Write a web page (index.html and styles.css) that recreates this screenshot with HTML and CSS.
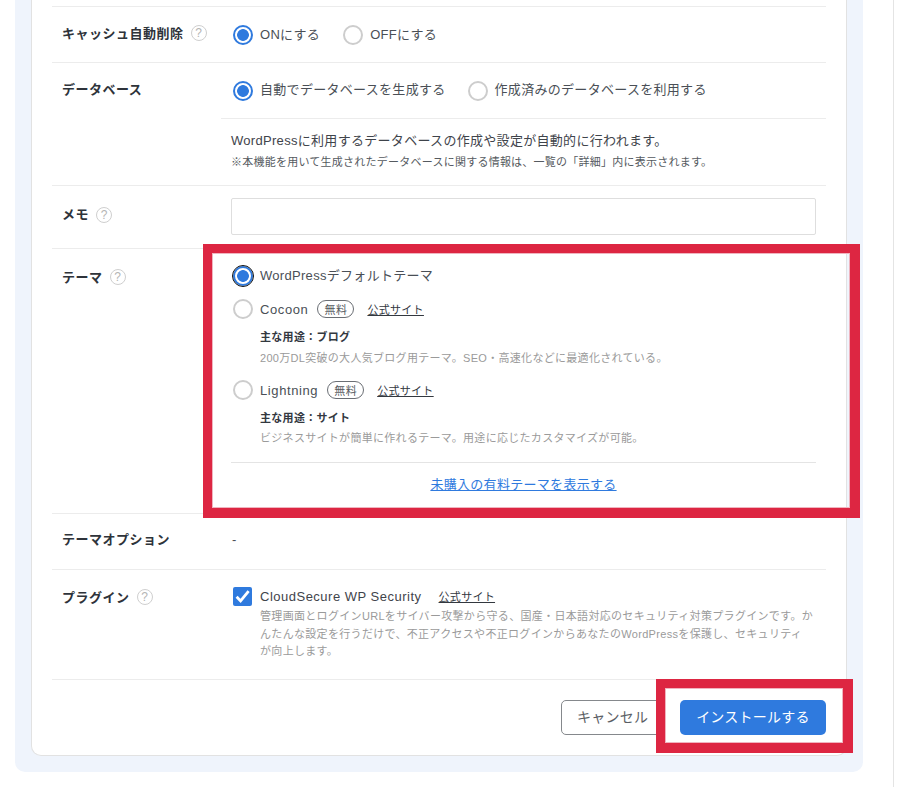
FILE: index.html
```html
<!DOCTYPE html>
<html lang="ja">
<head>
<meta charset="utf-8">
<title>WordPress インストール</title>
<link rel="stylesheet" href="styles.css">
</head>
<body>
<div class="page">
  <main class="panel">
    <section class="card">
      <div class="row row-top"></div>

      <div class="row row-cache">
        <div class="label">キャッシュ自動削除<span class="help">?</span></div>
        <div class="value radios">
          <label class="choice"><span class="radio on"></span>ONにする</label>
          <label class="choice"><span class="radio"></span>OFFにする</label>
        </div>
      </div>

      <div class="row row-db">
        <div class="db-head">
          <div class="label">データベース</div>
          <div class="value radios">
            <label class="choice"><span class="radio on"></span>自動でデータベースを生成する</label>
            <label class="choice"><span class="radio"></span>作成済みのデータベースを利用する</label>
          </div>
        </div>
        <div class="db-note">
          <p class="note-main">WordPressに利用するデータベースの作成や設定が自動的に行われます。</p>
          <p class="note-sub">※本機能を用いて生成されたデータベースに関する情報は、一覧の「詳細」内に表示されます。</p>
        </div>
      </div>

      <div class="row row-memo">
        <div class="label">メモ<span class="help">?</span></div>
        <div class="value"><div class="memo-input"></div></div>
      </div>

      <div class="row row-theme">
        <div class="label">テーマ<span class="help">?</span></div>
        <div class="value themes">
          <label class="choice theme-default"><span class="radio on focus"></span>WordPressデフォルトテーマ</label>

          <div class="theme">
            <div class="theme-head">
              <span class="radio"></span><span class="theme-name">Cocoon</span><span class="badge">無料</span><a class="site-link" href="#">公式サイト</a>
            </div>
            <p class="use">主な用途：ブログ</p>
            <p class="desc">200万DL突破の大人気ブログ用テーマ。SEO・高速化などに最適化されている。</p>
          </div>

          <div class="theme">
            <div class="theme-head">
              <span class="radio"></span><span class="theme-name">Lightning</span><span class="badge">無料</span><a class="site-link" href="#">公式サイト</a>
            </div>
            <p class="use">主な用途：サイト</p>
            <p class="desc">ビジネスサイトが簡単に作れるテーマ。用途に応じたカスタマイズが可能。</p>
          </div>

          <div class="more"><a href="#">未購入の有料テーマを表示する</a></div>
        </div>
      </div>

      <div class="row row-option">
        <div class="label">テーマオプション</div>
        <div class="value dash">-</div>
      </div>

      <div class="row row-plugin">
        <div class="label">プラグイン<span class="help">?</span></div>
        <div class="value plugin">
          <span class="check"><svg viewBox="0 0 19 19" width="19" height="19"><path d="M3.6 9.8 7.6 14 15.6 4.2" fill="none" stroke="#fff" stroke-width="2.8"/></svg></span>
          <div class="plugin-body">
            <div class="plugin-head"><span class="plugin-name">CloudSecure WP Security</span><a class="site-link" href="#">公式サイト</a></div>
            <p class="plugin-desc">管理画面とログインURLをサイバー攻撃から守る、国産・日本語対応のセキュリティ対策プラグインです。かんたんな設定を行うだけで、不正アクセスや不正ログインからあなたのWordPressを保護し、セキュリティ<br>が向上します。</p>
          </div>
        </div>
      </div>

      <div class="actions">
        <button class="btn btn-cancel" type="button">キャンセル</button>
        <button class="btn btn-install" type="button">インストールする</button>
      </div>
    </section>
  </main>
  <aside class="side"></aside>
</div>
<div class="mark mark-theme"></div>
<div class="mark mark-install"></div>
</body>
</html>
```

FILE: styles.css
```css
* { box-sizing: border-box; }
html, body { margin: 0; padding: 0; }
body {
  position: relative;
  width: 920px;
  height: 787px;
  overflow: hidden;
  background: #fff;
  color: #33383f;
  font-family: "Liberation Sans", "Noto Sans CJK JP", sans-serif;
  font-size: 13px;
  letter-spacing: 0.3px;
}
p { margin: 0; }
a { color: inherit; }

.page { display: flex; height: 787px; }
.panel {
  width: 848px;
  height: 772px;
  margin-left: 15px;
  padding: 0 16px 16px;
  background: #eff4fc;
  border-radius: 0 0 10px 10px;
}
.card {
  height: 756px;
  padding: 0 20px;
  background: #fff;
  border: 1px solid #e2e2e2;
  border-top: 0;
  border-radius: 0 0 10px 10px;
}
.side {
  width: 1px;
  margin-left: 30px;
  background: #e4e4e4;
}

.row {
  display: flex;
  border-bottom: 1px solid #ececec;
}
.row-top { height: 7px; }
.row-cache { height: 56px; padding-top: 16px; }
.row-db { display: block; height: 123px; }
.db-head { display: flex; height: 55px; padding-top: 16px; }
.row-memo { height: 63px; padding-top: 12px; }
.row-theme { height: 265px; padding-top: 16px; }
.row-option { height: 56px; padding-top: 15px; }
.row-plugin { height: 110px; padding-top: 17px; }

.label {
  display: flex;
  align-items: center;
  flex: none;
  width: 169px;
  height: 18px;
  margin-left: 10px;
  color: #2e333a;
  font-weight: 700;
  font-size: 13px;
  letter-spacing: 0.5px;
}
.row-memo .label { margin-top: 6px; }
.row-theme .label { margin-top: 2px; }
.help {
  display: flex;
  align-items: center;
  justify-content: center;
  width: 16px;
  height: 16px;
  margin: 1px 0 0 7px;
  border: 1.5px solid #cfcfcf;
  border-radius: 50%;
  color: #b5b5b5;
  font-family: "Liberation Sans", sans-serif;
  font-size: 12px;
  font-weight: 400;
  letter-spacing: 0;
}
.row-memo .help { margin-top: 4px; }
.value { flex: 1; min-width: 0; }

.radios { display: flex; gap: 23px; padding: 2px 0 0 2px; }
.choice {
  display: flex;
  align-items: flex-start;
  gap: 7px;
  height: 20px;
  color: #4a4f56;
  line-height: 20px;
}
.radio {
  flex: none;
  width: 20px;
  height: 20px;
  background: #fff;
  border: 2px solid #cdcdcd;
  border-radius: 50%;
}
.radio.on {
  border: 2.5px solid #2f7ade;
  background: radial-gradient(circle, #2f7ade 0, #2f7ade 5.5px, #fff 6.2px);
}
.radio.focus { outline: 1.5px solid #111; outline-offset: 0; }

.db-head .radios { gap: 22px; }
.db-head .choice { line-height: 18px; }

.db-note {
  height: 68px;
  margin-left: 169px;
  padding: 13px 0 0 10px;
  border-top: 1px solid #ececec;
}
.note-main { line-height: 18px; color: #3f444b; }
.note-sub { margin-top: 5px; font-size: 11px; line-height: 14px; color: #555a60; letter-spacing: 0.24px; }

.memo-input {
  width: 585px;
  height: 37px;
  background: #fff;
  border: 1px solid #dedede;
  border-radius: 2px;
}

.themes { padding-top: 1px; }
.theme-default { margin-left: 2px; }
.theme { margin-left: 2px; }
.theme-default + .theme { margin-top: 13px; }
.theme + .theme { margin-top: 14px; }
.theme-head {
  display: flex;
  align-items: center;
  height: 20px;
  color: #4a4f56;
}
.theme-name { margin-left: 7px; letter-spacing: 0.6px; }
.badge {
  display: flex;
  align-items: center;
  justify-content: center;
  width: 37px;
  height: 18px;
  margin-left: 9px;
  border: 1px solid #6a6e74;
  border-radius: 9px;
  color: #555a60;
  font-size: 11px;
  letter-spacing: 0.3px;
}
.site-link {
  margin-left: 13px;
  color: #33383f;
  font-size: 11px;
  letter-spacing: 0.3px;
}
.use {
  margin-top: 10px;
  padding-left: 27px;
  color: #33383f;
  font-size: 11px;
  font-weight: 700;
  line-height: 16px;
  letter-spacing: 0.3px;
}
.desc {
  margin-top: 5px;
  padding-left: 27px;
  color: #9a9a9a;
  font-size: 11px;
  line-height: 16px;
  letter-spacing: 0.3px;
}
.theme + .theme .desc { margin-top: 4px; }
.more {
  width: 585px;
  height: 44px;
  margin-top: 16px;
  padding-top: 12px;
  border-top: 1px solid #e4e4e4;
  text-align: center;
  line-height: 20px;
}
.more a { color: #2f7ade; }

.dash { color: #4a4f56; line-height: 18px; padding-top: 2px; padding-left: 1px; }

.plugin { display: flex; padding-left: 2px; }
.check {
  flex: none;
  width: 19px;
  height: 19px;
  background: #2f7ade;
  border-radius: 2px;
}
.check svg { display: block; }
.plugin-body { margin-left: 8px; width: 555px; }
.plugin-head { display: flex; align-items: center; height: 18px; color: #3f444b; }
.plugin-name { letter-spacing: 0.5px; }
.plugin-head .site-link { margin-left: 17px; }
.plugin-desc {
  margin-top: 3px;
  color: #9a9a9a;
  font-size: 11px;
  line-height: 17.6px;
  letter-spacing: 0.32px;
}

.actions {
  display: flex;
  justify-content: flex-end;
  gap: 19px;
  padding-top: 20px;
}
.btn {
  height: 35px;
  padding: 0 0 3px;
  border-radius: 5px;
  font-family: inherit;
  font-size: 14px;
  letter-spacing: 0.25px;
  cursor: pointer;
}
.btn-cancel {
  width: 100px;
  padding-left: 15px;
  background: #fff;
  border: 1px solid #85888c;
  color: #5a5e64;
  text-align: left;
}
.btn-install {
  width: 146px;
  background: #2f7ade;
  border: 0;
  color: #fff;
}

.mark {
  position: absolute;
  border-style: solid;
  border-color: #dd2642;
  box-shadow: inset 0 0 0 1px #f0b4bf;
}
.mark-theme {
  left: 203px;
  top: 244px;
  width: 657px;
  height: 274px;
  border-width: 9px 10px 10px 9px;
}
.mark-install {
  left: 656px;
  top: 679px;
  width: 197px;
  height: 74px;
  border-width: 9px 10px 10px 9px;
}
```
